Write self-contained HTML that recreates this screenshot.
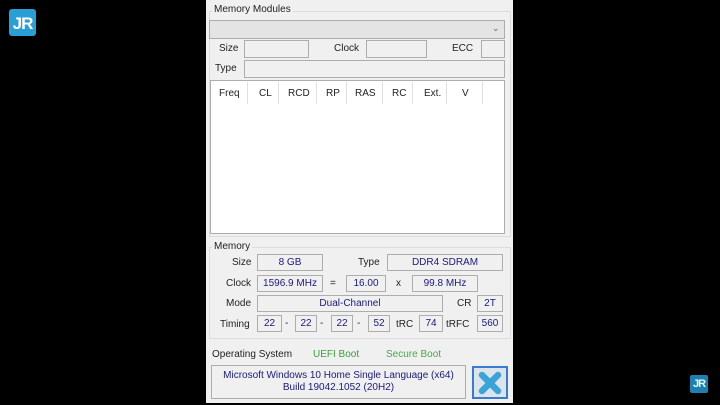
<!DOCTYPE html>
<html><head><meta charset="utf-8"><style>
*{margin:0;padding:0;box-sizing:border-box}
body{width:720px;height:405px;background:#000;position:relative;overflow:hidden;font-family:"Liberation Sans",sans-serif;font-size:10px;color:#222}
.p{position:absolute;left:206px;top:0;width:307px;height:403px;background:#f0f0f0}
.a{position:absolute;white-space:nowrap}
.b{position:absolute;border:1px solid #adadad;background:#f0f0f0;color:#1a1a80;text-align:center;font-size:10px;line-height:15px}
.g{position:absolute;border:1px solid #dcdcdc}
.l{position:absolute;background:#f0f0f0;padding:0 2px;color:#222}
.h{position:absolute;top:88px;font-size:10px}
.s{position:absolute;top:82px;width:1px;height:22px;background:#e0e0e0}
</style></head><body>
<div style="position:absolute;left:9px;top:9px;width:27px;height:27px;background:#2a9fd6;border-radius:3px;color:#fff;font-weight:bold;font-size:17px;line-height:30px;text-align:center;letter-spacing:-1px">JR</div>
<div style="position:absolute;left:690px;top:375px;width:18px;height:18px;background:#1f7fb0;border-radius:2px;color:#dff;font-weight:bold;font-size:11px;line-height:19px;text-align:center;letter-spacing:-1px">JR</div>
<div class="p"></div>
<div class="g" style="left:209px;top:11px;width:302px;height:226px"></div>
<div class="l" style="left:212px;top:4px">Memory Modules</div>
<div class="b" style="left:209px;top:20px;width:296px;height:19px;background:#e4e4e4"></div>
<div class="a" style="left:492px;top:23px;color:#666;font-size:9px">&#8964;</div>
<div class="a" style="left:219px;top:43px">Size</div>
<div class="b" style="left:244px;top:40px;width:65px;height:18px"></div>
<div class="a" style="left:334px;top:43px">Clock</div>
<div class="b" style="left:366px;top:40px;width:61px;height:18px"></div>
<div class="a" style="left:452px;top:43px">ECC</div>
<div class="b" style="left:481px;top:40px;width:24px;height:18px"></div>
<div class="a" style="left:215px;top:63px">Type</div>
<div class="b" style="left:244px;top:60px;width:261px;height:18px"></div>
<div style="position:absolute;left:210px;top:80px;width:295px;height:154px;background:#fff;border:1px solid #adadad"></div>
<div class="h" style="left:219px">Freq</div><div class="h" style="left:259px">CL</div><div class="h" style="left:288px">RCD</div><div class="h" style="left:326px">RP</div><div class="h" style="left:355px">RAS</div><div class="h" style="left:392px">RC</div><div class="h" style="left:424px">Ext.</div><div class="h" style="left:462px">V</div>
<div class="s" style="left:247px"></div><div class="s" style="left:278px"></div><div class="s" style="left:316px"></div><div class="s" style="left:346px"></div><div class="s" style="left:382px"></div><div class="s" style="left:412px"></div><div class="s" style="left:446px"></div><div class="s" style="left:482px"></div>
<div class="g" style="left:209px;top:247px;width:302px;height:92px"></div>
<div class="l" style="left:212px;top:241px">Memory</div>
<div class="a" style="left:232px;top:257px">Size</div>
<div class="b" style="left:257px;top:254px;width:66px;height:17px">8 GB</div>
<div class="a" style="left:358px;top:257px">Type</div>
<div class="b" style="left:387px;top:254px;width:116px;height:17px">DDR4 SDRAM</div>
<div class="a" style="left:226px;top:278px">Clock</div>
<div class="b" style="left:257px;top:275px;width:66px;height:17px">1596.9 MHz</div>
<div class="a" style="left:330px;top:278px">=</div>
<div class="b" style="left:346px;top:275px;width:40px;height:17px">16.00</div>
<div class="a" style="left:396px;top:278px">x</div>
<div class="b" style="left:412px;top:275px;width:66px;height:17px">99.8 MHz</div>
<div class="a" style="left:226px;top:298px">Mode</div>
<div class="b" style="left:257px;top:295px;width:186px;height:17px">Dual-Channel</div>
<div class="a" style="left:457px;top:298px">CR</div>
<div class="b" style="left:477px;top:295px;width:26px;height:17px">2T</div>
<div class="a" style="left:220px;top:319px">Timing</div>
<div class="b" style="left:257px;top:315px;width:25px;height:17px">22</div>
<div class="a" style="left:285px;top:318px">-</div>
<div class="b" style="left:295px;top:315px;width:22px;height:17px">22</div>
<div class="a" style="left:320px;top:318px">-</div>
<div class="b" style="left:331px;top:315px;width:22px;height:17px">22</div>
<div class="a" style="left:357px;top:318px">-</div>
<div class="b" style="left:368px;top:315px;width:22px;height:17px">52</div>
<div class="a" style="left:396px;top:319px">tRC</div>
<div class="b" style="left:419px;top:315px;width:24px;height:17px">74</div>
<div class="a" style="left:446px;top:319px">tRFC</div>
<div class="b" style="left:477px;top:315px;width:26px;height:17px">560</div>
<div class="a" style="left:212px;top:349px">Operating System</div>
<div class="a" style="left:313px;top:349px;color:#3aa03a">UEFI Boot</div>
<div class="a" style="left:386px;top:349px;color:#4aa84a">Secure Boot</div>
<div class="b" style="left:211px;top:365px;width:255px;height:34px;line-height:12px;padding-top:4px">Microsoft Windows 10 Home Single Language (x64)<br>Build 19042.1052 (20H2)</div>
<div style="position:absolute;left:472px;top:366px;width:36px;height:33px;border:2px solid #3a7bd0;background:#dde3ea"></div>
<svg style="position:absolute;left:476px;top:369px" width="28" height="28" viewBox="0 0 28 28"><path d="M6 6L22 22M22 6L6 22" stroke="#3aa4d8" stroke-width="6.5" stroke-linecap="round"/></svg>
</body></html>
